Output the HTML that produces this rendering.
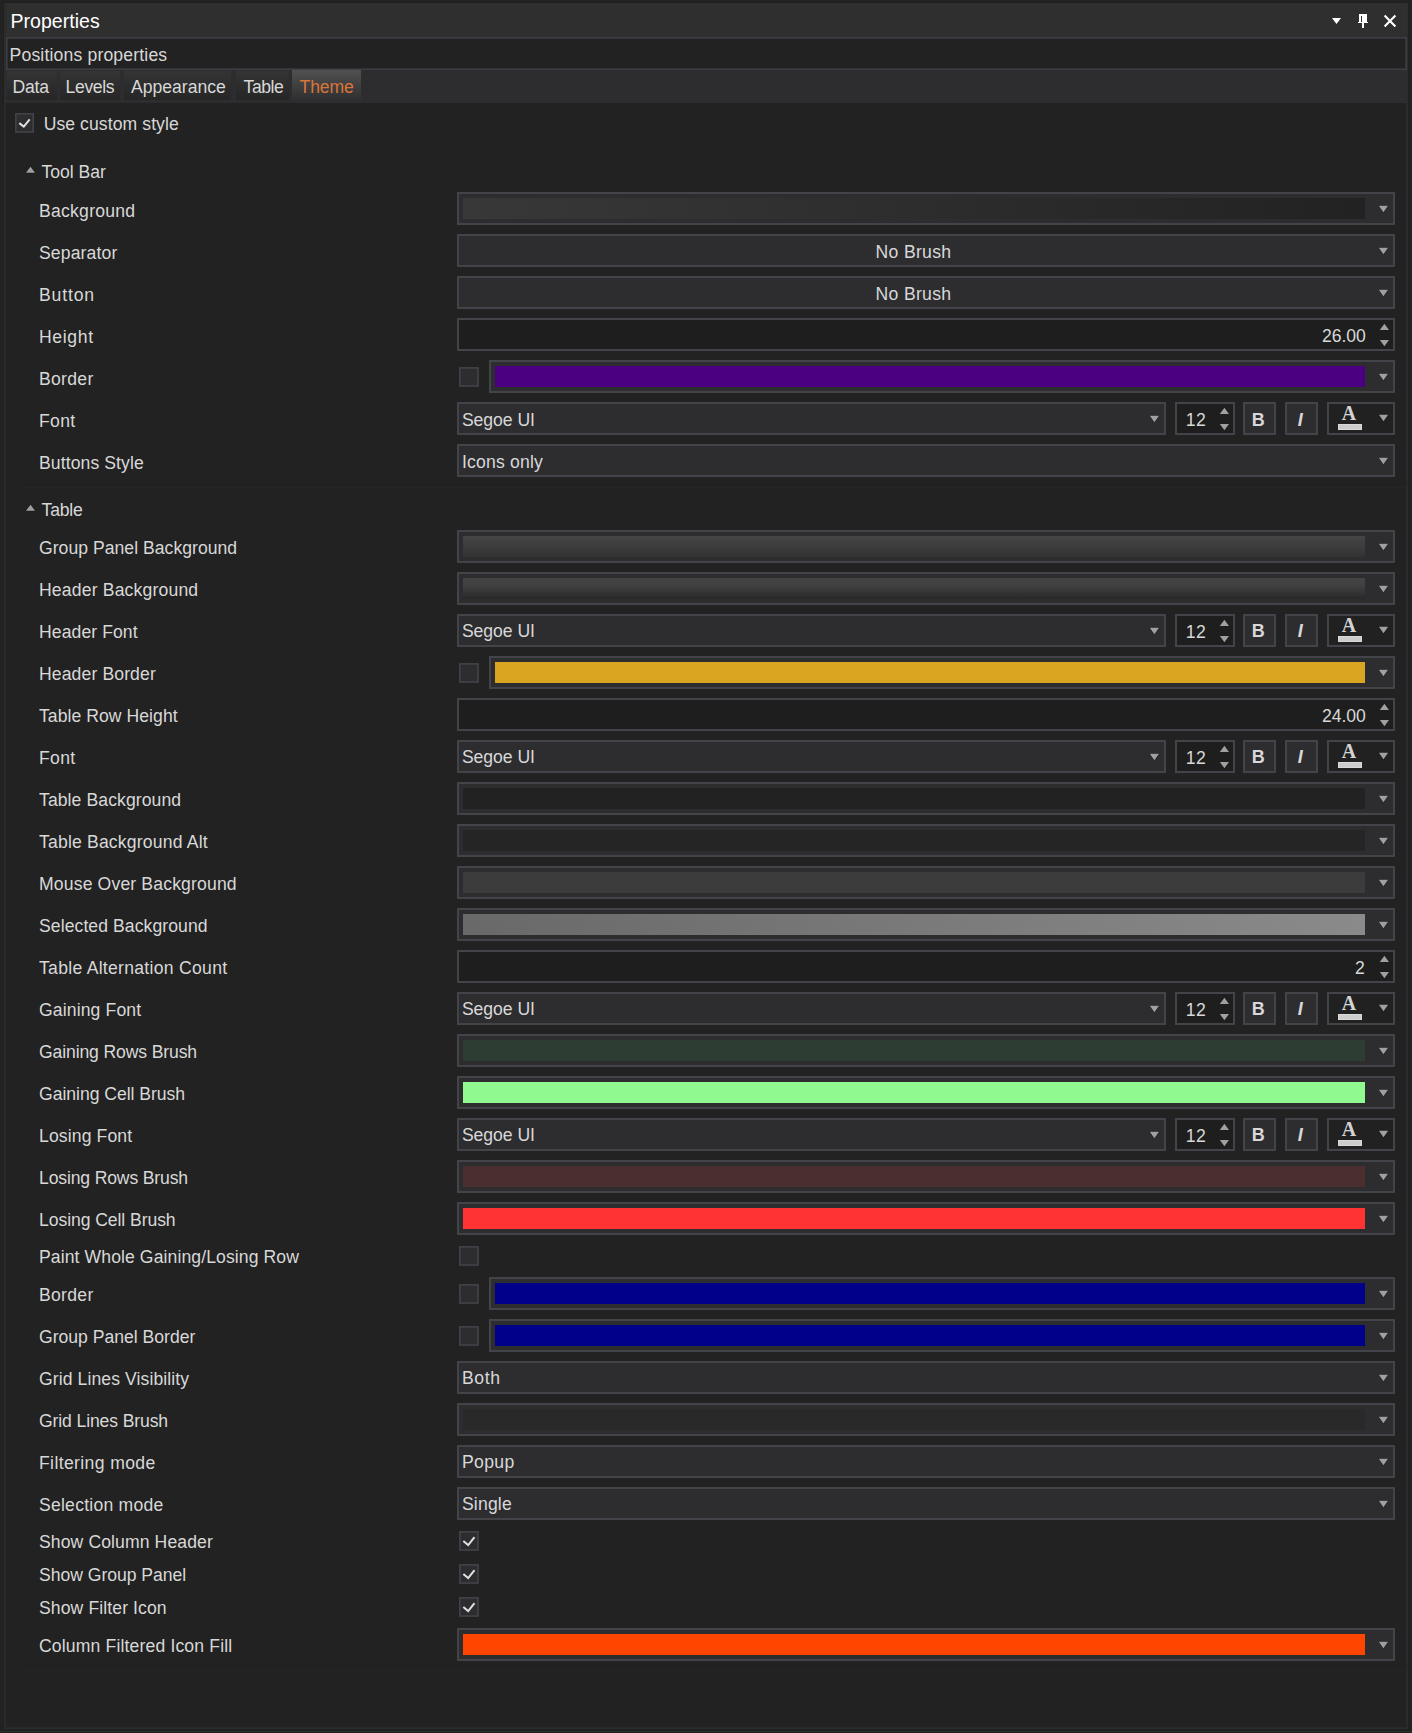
<!DOCTYPE html>
<html><head><meta charset="utf-8"><title>Properties</title>
<style>
html,body{margin:0;padding:0;}
body{width:1412px;height:1733px;background:#222222;position:relative;overflow:hidden;font-family:"Liberation Sans",sans-serif;}
div,svg,span{position:absolute;display:block;}
div{box-sizing:content-box;}
span{white-space:pre;line-height:20px;height:20px;}
</style></head><body>
<div style="left:3px;top:2px;width:1406px;height:1728px;background:#1f1f1f;"></div>
<div style="left:4px;top:3px;width:1404px;height:1726px;background:#222222;"></div>
<div style="left:4px;top:3px;width:1404px;height:34px;background:#2f2f2f;"></div>
<div style="left:5px;top:4px;width:1px;height:33px;background:#2b2b2b;"></div>
<div style="left:4px;top:37px;width:1404px;height:66px;background:#2d2d30;"></div>
<div style="left:4px;top:3px;width:1px;height:1726px;background:#2d2d30;"></div>
<div style="left:5px;top:103px;width:1px;height:1625px;background:#28282a;"></div>
<div style="left:1407px;top:3px;width:1px;height:1726px;background:#2d2d30;"></div>
<div style="left:1406px;top:103px;width:1px;height:1625px;background:#28282a;"></div>
<div style="left:4px;top:1728px;width:1404px;height:1px;background:#2b2b2d;"></div>
<div style="left:6px;top:1727px;width:1400px;height:1px;background:#29292b;"></div>
<div style="left:0px;top:1729px;width:1412px;height:2px;background:#212121;"></div>
<div style="left:0px;top:1731px;width:1412px;height:1px;background:#2e2e2e;"></div>
<div style="left:0px;top:1732px;width:1412px;height:1px;background:#222222;"></div>
<svg style="left:1332px;top:18px" width="9" height="6" viewBox="0 0 9 6"><path d="M0 0H9L4.5 6Z" fill="#fff"/></svg>
<svg style="left:1357px;top:13px" width="12" height="16" viewBox="0 0 12 16"><path d="M2 1H10V9H11V10H7V15H5V10H1V9H2Z" fill="#fff"/><rect x="4" y="3" width="1" height="6" fill="#2d2d2d"/></svg>
<svg style="left:1383px;top:14px" width="14" height="14" viewBox="0 0 14 14"><path d="M1.6 1.6L12.4 12.4M12.4 1.6L1.6 12.4" stroke="#fff" stroke-width="2.1" fill="none"/></svg>
<svg style="left:0;top:30px" width="1412" height="48" viewBox="0 30 1412 48"><rect x="6.81" y="37.92" width="1399.34" height="31.25" fill="#222222" stroke="#3f3f46" stroke-width="1.5"/></svg>
<div style="left:7px;top:71px;width:50px;height:29px;background:linear-gradient(#343434,#262626);"></div>
<div style="left:60px;top:71px;width:60px;height:29px;background:linear-gradient(#343434,#262626);"></div>
<div style="left:124px;top:71px;width:107px;height:29px;background:linear-gradient(#343434,#262626);"></div>
<div style="left:236px;top:71px;width:53px;height:29px;background:linear-gradient(#343434,#262626);"></div>
<div style="left:292px;top:70px;width:69px;height:30px;background:linear-gradient(#515151,#2f2f31);"></div>
<svg style="left:15px;top:113px" width="21" height="21" viewBox="0 0 21 21"><rect x=".85" y=".85" width="17.40" height="18.10" fill="#2d2d30" stroke="#44444b" stroke-width="1.5"/><path d="M4.3 10.1L8.8 13.6L14.7 6.3" fill="none" stroke="#e0e0e0" stroke-width="2"/></svg>
<svg style="left:24px;top:164px" width="14" height="11" viewBox="0 0 14 11"><path d="M2.00 8.80H11.00L6.50 2.80Z" fill="#a0a0a0" stroke="#1d1d1d" stroke-width=".9" paint-order="stroke"/></svg>
<div style="left:457px;top:192px;width:934px;height:29px;background:#2d2d30;border:2px solid #43434a;"></div>
<div style="left:463px;top:198px;width:902px;height:21px;background:linear-gradient(90deg,#383838,#222222);"></div>
<svg style="left:1376px;top:203px" width="14" height="11" viewBox="0 0 14 11"><path d="M2.80 2.80H12.00L7.40 9.30Z" fill="#a0a0a0" stroke="#1d1d1d" stroke-width=".9" paint-order="stroke"/></svg>
<div style="left:457px;top:234px;width:934px;height:29px;background:#2d2d30;border:2px solid #43434a;"></div>
<svg style="left:1376px;top:245px" width="14" height="11" viewBox="0 0 14 11"><path d="M2.80 2.80H12.00L7.40 9.30Z" fill="#a0a0a0" stroke="#1d1d1d" stroke-width=".9" paint-order="stroke"/></svg>
<div style="left:457px;top:276px;width:934px;height:29px;background:#2d2d30;border:2px solid #43434a;"></div>
<svg style="left:1376px;top:287px" width="14" height="11" viewBox="0 0 14 11"><path d="M2.80 2.80H12.00L7.40 9.30Z" fill="#a0a0a0" stroke="#1d1d1d" stroke-width=".9" paint-order="stroke"/></svg>
<div style="left:457px;top:318px;width:934px;height:29px;background:#1e1e1e;border:2px solid #43434a;"></div>
<svg style="left:1377px;top:321px" width="14" height="11" viewBox="0 0 14 11"><path d="M2.80 9.10H12.00L7.40 2.80Z" fill="#a0a0a0" stroke="#1d1d1d" stroke-width=".9" paint-order="stroke"/></svg>
<svg style="left:1377px;top:337px" width="14" height="11" viewBox="0 0 14 11"><path d="M2.80 2.90H12.00L7.40 9.30Z" fill="#a0a0a0" stroke="#1d1d1d" stroke-width=".9" paint-order="stroke"/></svg>
<svg style="left:459px;top:367px" width="21" height="21" viewBox="0 0 21 21"><rect x=".85" y=".85" width="18.20" height="18.20" fill="#2d2d30" stroke="#44444b" stroke-width="1.5"/></svg>
<div style="left:489px;top:360px;width:902px;height:29px;background:#2d2d30;border:2px solid #43434a;"></div>
<div style="left:495px;top:366px;width:870px;height:21px;background:#4b0082;"></div>
<svg style="left:1376px;top:371px" width="14" height="11" viewBox="0 0 14 11"><path d="M2.80 2.80H12.00L7.40 9.30Z" fill="#a0a0a0" stroke="#1d1d1d" stroke-width=".9" paint-order="stroke"/></svg>
<div style="left:457px;top:402px;width:705px;height:29px;background:#2d2d30;border:2px solid #43434a;"></div>
<svg style="left:1147px;top:413px" width="14" height="11" viewBox="0 0 14 11"><path d="M2.80 2.80H12.00L7.40 9.30Z" fill="#a0a0a0" stroke="#1d1d1d" stroke-width=".9" paint-order="stroke"/></svg>
<div style="left:1175px;top:402px;width:56px;height:29px;background:#1e1e1e;border:2px solid #43434a;"></div>
<svg style="left:1217px;top:405px" width="14" height="11" viewBox="0 0 14 11"><path d="M2.80 9.10H12.00L7.40 2.80Z" fill="#a0a0a0" stroke="#1d1d1d" stroke-width=".9" paint-order="stroke"/></svg>
<svg style="left:1217px;top:421px" width="14" height="11" viewBox="0 0 14 11"><path d="M2.80 2.90H12.00L7.40 9.30Z" fill="#a0a0a0" stroke="#1d1d1d" stroke-width=".9" paint-order="stroke"/></svg>
<div style="left:1243px;top:402px;width:29px;height:29px;background:#2d2d30;border:2px solid #43434a;"></div>
<div style="left:1285px;top:402px;width:29px;height:29px;background:#2d2d30;border:2px solid #43434a;"></div>
<div style="left:1327px;top:402px;width:64px;height:29px;background:#212121;border:2px solid #43434a;"></div>
<div style="left:1338px;top:424px;width:22px;height:4px;background:#cccccc;border:1px solid #d9d9d9;"></div>
<svg style="left:1376px;top:412px" width="14" height="11" viewBox="0 0 14 11"><path d="M2.90 2.80H12.10L7.50 9.20Z" fill="#a0a0a0" stroke="#1d1d1d" stroke-width=".9" paint-order="stroke"/></svg>
<div style="left:457px;top:444px;width:934px;height:29px;background:#2d2d30;border:2px solid #43434a;"></div>
<svg style="left:1376px;top:455px" width="14" height="11" viewBox="0 0 14 11"><path d="M2.80 2.80H12.00L7.40 9.30Z" fill="#a0a0a0" stroke="#1d1d1d" stroke-width=".9" paint-order="stroke"/></svg>
<div style="left:22px;top:487px;width:1385px;height:1px;background:#262626;"></div>
<svg style="left:24px;top:502px" width="14" height="11" viewBox="0 0 14 11"><path d="M2.00 8.80H11.00L6.50 2.80Z" fill="#a0a0a0" stroke="#1d1d1d" stroke-width=".9" paint-order="stroke"/></svg>
<div style="left:457px;top:530px;width:934px;height:29px;background:#2d2d30;border:2px solid #43434a;"></div>
<div style="left:463px;top:536px;width:902px;height:21px;background:linear-gradient(#454545,#333333);"></div>
<svg style="left:1376px;top:541px" width="14" height="11" viewBox="0 0 14 11"><path d="M2.80 2.80H12.00L7.40 9.30Z" fill="#a0a0a0" stroke="#1d1d1d" stroke-width=".9" paint-order="stroke"/></svg>
<div style="left:457px;top:572px;width:934px;height:29px;background:#2d2d30;border:2px solid #43434a;"></div>
<div style="left:463px;top:578px;width:902px;height:21px;background:linear-gradient(#444444 0%,#414141 35%,#282828 100%);"></div>
<svg style="left:1376px;top:583px" width="14" height="11" viewBox="0 0 14 11"><path d="M2.80 2.80H12.00L7.40 9.30Z" fill="#a0a0a0" stroke="#1d1d1d" stroke-width=".9" paint-order="stroke"/></svg>
<div style="left:457px;top:614px;width:705px;height:29px;background:#2d2d30;border:2px solid #43434a;"></div>
<svg style="left:1147px;top:625px" width="14" height="11" viewBox="0 0 14 11"><path d="M2.80 2.80H12.00L7.40 9.30Z" fill="#a0a0a0" stroke="#1d1d1d" stroke-width=".9" paint-order="stroke"/></svg>
<div style="left:1175px;top:614px;width:56px;height:29px;background:#1e1e1e;border:2px solid #43434a;"></div>
<svg style="left:1217px;top:617px" width="14" height="11" viewBox="0 0 14 11"><path d="M2.80 9.10H12.00L7.40 2.80Z" fill="#a0a0a0" stroke="#1d1d1d" stroke-width=".9" paint-order="stroke"/></svg>
<svg style="left:1217px;top:633px" width="14" height="11" viewBox="0 0 14 11"><path d="M2.80 2.90H12.00L7.40 9.30Z" fill="#a0a0a0" stroke="#1d1d1d" stroke-width=".9" paint-order="stroke"/></svg>
<div style="left:1243px;top:614px;width:29px;height:29px;background:#2d2d30;border:2px solid #43434a;"></div>
<div style="left:1285px;top:614px;width:29px;height:29px;background:#2d2d30;border:2px solid #43434a;"></div>
<div style="left:1327px;top:614px;width:64px;height:29px;background:#212121;border:2px solid #43434a;"></div>
<div style="left:1338px;top:636px;width:22px;height:4px;background:#cccccc;border:1px solid #d9d9d9;"></div>
<svg style="left:1376px;top:624px" width="14" height="11" viewBox="0 0 14 11"><path d="M2.90 2.80H12.10L7.50 9.20Z" fill="#a0a0a0" stroke="#1d1d1d" stroke-width=".9" paint-order="stroke"/></svg>
<svg style="left:459px;top:663px" width="21" height="21" viewBox="0 0 21 21"><rect x=".85" y=".85" width="18.20" height="18.20" fill="#2d2d30" stroke="#44444b" stroke-width="1.5"/></svg>
<div style="left:489px;top:656px;width:902px;height:29px;background:#2d2d30;border:2px solid #43434a;"></div>
<div style="left:495px;top:662px;width:870px;height:21px;background:#daa520;"></div>
<svg style="left:1376px;top:667px" width="14" height="11" viewBox="0 0 14 11"><path d="M2.80 2.80H12.00L7.40 9.30Z" fill="#a0a0a0" stroke="#1d1d1d" stroke-width=".9" paint-order="stroke"/></svg>
<div style="left:457px;top:698px;width:934px;height:29px;background:#1e1e1e;border:2px solid #43434a;"></div>
<svg style="left:1377px;top:701px" width="14" height="11" viewBox="0 0 14 11"><path d="M2.80 9.10H12.00L7.40 2.80Z" fill="#a0a0a0" stroke="#1d1d1d" stroke-width=".9" paint-order="stroke"/></svg>
<svg style="left:1377px;top:717px" width="14" height="11" viewBox="0 0 14 11"><path d="M2.80 2.90H12.00L7.40 9.30Z" fill="#a0a0a0" stroke="#1d1d1d" stroke-width=".9" paint-order="stroke"/></svg>
<div style="left:457px;top:740px;width:705px;height:29px;background:#2d2d30;border:2px solid #43434a;"></div>
<svg style="left:1147px;top:751px" width="14" height="11" viewBox="0 0 14 11"><path d="M2.80 2.80H12.00L7.40 9.30Z" fill="#a0a0a0" stroke="#1d1d1d" stroke-width=".9" paint-order="stroke"/></svg>
<div style="left:1175px;top:740px;width:56px;height:29px;background:#1e1e1e;border:2px solid #43434a;"></div>
<svg style="left:1217px;top:743px" width="14" height="11" viewBox="0 0 14 11"><path d="M2.80 9.10H12.00L7.40 2.80Z" fill="#a0a0a0" stroke="#1d1d1d" stroke-width=".9" paint-order="stroke"/></svg>
<svg style="left:1217px;top:759px" width="14" height="11" viewBox="0 0 14 11"><path d="M2.80 2.90H12.00L7.40 9.30Z" fill="#a0a0a0" stroke="#1d1d1d" stroke-width=".9" paint-order="stroke"/></svg>
<div style="left:1243px;top:740px;width:29px;height:29px;background:#2d2d30;border:2px solid #43434a;"></div>
<div style="left:1285px;top:740px;width:29px;height:29px;background:#2d2d30;border:2px solid #43434a;"></div>
<div style="left:1327px;top:740px;width:64px;height:29px;background:#212121;border:2px solid #43434a;"></div>
<div style="left:1338px;top:762px;width:22px;height:4px;background:#cccccc;border:1px solid #d9d9d9;"></div>
<svg style="left:1376px;top:750px" width="14" height="11" viewBox="0 0 14 11"><path d="M2.90 2.80H12.10L7.50 9.20Z" fill="#a0a0a0" stroke="#1d1d1d" stroke-width=".9" paint-order="stroke"/></svg>
<div style="left:457px;top:782px;width:934px;height:29px;background:#2d2d30;border:2px solid #43434a;"></div>
<div style="left:463px;top:788px;width:902px;height:21px;background:#222222;"></div>
<svg style="left:1376px;top:793px" width="14" height="11" viewBox="0 0 14 11"><path d="M2.80 2.80H12.00L7.40 9.30Z" fill="#a0a0a0" stroke="#1d1d1d" stroke-width=".9" paint-order="stroke"/></svg>
<div style="left:457px;top:824px;width:934px;height:29px;background:#2d2d30;border:2px solid #43434a;"></div>
<div style="left:463px;top:830px;width:902px;height:21px;background:#252526;"></div>
<svg style="left:1376px;top:835px" width="14" height="11" viewBox="0 0 14 11"><path d="M2.80 2.80H12.00L7.40 9.30Z" fill="#a0a0a0" stroke="#1d1d1d" stroke-width=".9" paint-order="stroke"/></svg>
<div style="left:457px;top:866px;width:934px;height:29px;background:#2d2d30;border:2px solid #43434a;"></div>
<div style="left:463px;top:872px;width:902px;height:21px;background:#3c3c3c;"></div>
<svg style="left:1376px;top:877px" width="14" height="11" viewBox="0 0 14 11"><path d="M2.80 2.80H12.00L7.40 9.30Z" fill="#a0a0a0" stroke="#1d1d1d" stroke-width=".9" paint-order="stroke"/></svg>
<div style="left:457px;top:908px;width:934px;height:29px;background:#2d2d30;border:2px solid #43434a;"></div>
<div style="left:463px;top:914px;width:902px;height:21px;background:linear-gradient(90deg,#696969,#8a8a8a);"></div>
<svg style="left:1376px;top:919px" width="14" height="11" viewBox="0 0 14 11"><path d="M2.80 2.80H12.00L7.40 9.30Z" fill="#a0a0a0" stroke="#1d1d1d" stroke-width=".9" paint-order="stroke"/></svg>
<div style="left:457px;top:950px;width:934px;height:29px;background:#1e1e1e;border:2px solid #43434a;"></div>
<svg style="left:1377px;top:953px" width="14" height="11" viewBox="0 0 14 11"><path d="M2.80 9.10H12.00L7.40 2.80Z" fill="#a0a0a0" stroke="#1d1d1d" stroke-width=".9" paint-order="stroke"/></svg>
<svg style="left:1377px;top:969px" width="14" height="11" viewBox="0 0 14 11"><path d="M2.80 2.90H12.00L7.40 9.30Z" fill="#a0a0a0" stroke="#1d1d1d" stroke-width=".9" paint-order="stroke"/></svg>
<div style="left:457px;top:992px;width:705px;height:29px;background:#2d2d30;border:2px solid #43434a;"></div>
<svg style="left:1147px;top:1003px" width="14" height="11" viewBox="0 0 14 11"><path d="M2.80 2.80H12.00L7.40 9.30Z" fill="#a0a0a0" stroke="#1d1d1d" stroke-width=".9" paint-order="stroke"/></svg>
<div style="left:1175px;top:992px;width:56px;height:29px;background:#1e1e1e;border:2px solid #43434a;"></div>
<svg style="left:1217px;top:995px" width="14" height="11" viewBox="0 0 14 11"><path d="M2.80 9.10H12.00L7.40 2.80Z" fill="#a0a0a0" stroke="#1d1d1d" stroke-width=".9" paint-order="stroke"/></svg>
<svg style="left:1217px;top:1011px" width="14" height="11" viewBox="0 0 14 11"><path d="M2.80 2.90H12.00L7.40 9.30Z" fill="#a0a0a0" stroke="#1d1d1d" stroke-width=".9" paint-order="stroke"/></svg>
<div style="left:1243px;top:992px;width:29px;height:29px;background:#2d2d30;border:2px solid #43434a;"></div>
<div style="left:1285px;top:992px;width:29px;height:29px;background:#2d2d30;border:2px solid #43434a;"></div>
<div style="left:1327px;top:992px;width:64px;height:29px;background:#212121;border:2px solid #43434a;"></div>
<div style="left:1338px;top:1014px;width:22px;height:4px;background:#cccccc;border:1px solid #d9d9d9;"></div>
<svg style="left:1376px;top:1002px" width="14" height="11" viewBox="0 0 14 11"><path d="M2.90 2.80H12.10L7.50 9.20Z" fill="#a0a0a0" stroke="#1d1d1d" stroke-width=".9" paint-order="stroke"/></svg>
<div style="left:457px;top:1034px;width:934px;height:29px;background:#2d2d30;border:2px solid #43434a;"></div>
<div style="left:463px;top:1040px;width:902px;height:21px;background:#2d3d33;"></div>
<svg style="left:1376px;top:1045px" width="14" height="11" viewBox="0 0 14 11"><path d="M2.80 2.80H12.00L7.40 9.30Z" fill="#a0a0a0" stroke="#1d1d1d" stroke-width=".9" paint-order="stroke"/></svg>
<div style="left:457px;top:1076px;width:934px;height:29px;background:#2d2d30;border:2px solid #43434a;"></div>
<div style="left:463px;top:1082px;width:902px;height:21px;background:#90fa90;"></div>
<svg style="left:1376px;top:1087px" width="14" height="11" viewBox="0 0 14 11"><path d="M2.80 2.80H12.00L7.40 9.30Z" fill="#a0a0a0" stroke="#1d1d1d" stroke-width=".9" paint-order="stroke"/></svg>
<div style="left:457px;top:1118px;width:705px;height:29px;background:#2d2d30;border:2px solid #43434a;"></div>
<svg style="left:1147px;top:1129px" width="14" height="11" viewBox="0 0 14 11"><path d="M2.80 2.80H12.00L7.40 9.30Z" fill="#a0a0a0" stroke="#1d1d1d" stroke-width=".9" paint-order="stroke"/></svg>
<div style="left:1175px;top:1118px;width:56px;height:29px;background:#1e1e1e;border:2px solid #43434a;"></div>
<svg style="left:1217px;top:1121px" width="14" height="11" viewBox="0 0 14 11"><path d="M2.80 9.10H12.00L7.40 2.80Z" fill="#a0a0a0" stroke="#1d1d1d" stroke-width=".9" paint-order="stroke"/></svg>
<svg style="left:1217px;top:1137px" width="14" height="11" viewBox="0 0 14 11"><path d="M2.80 2.90H12.00L7.40 9.30Z" fill="#a0a0a0" stroke="#1d1d1d" stroke-width=".9" paint-order="stroke"/></svg>
<div style="left:1243px;top:1118px;width:29px;height:29px;background:#2d2d30;border:2px solid #43434a;"></div>
<div style="left:1285px;top:1118px;width:29px;height:29px;background:#2d2d30;border:2px solid #43434a;"></div>
<div style="left:1327px;top:1118px;width:64px;height:29px;background:#212121;border:2px solid #43434a;"></div>
<div style="left:1338px;top:1140px;width:22px;height:4px;background:#cccccc;border:1px solid #d9d9d9;"></div>
<svg style="left:1376px;top:1128px" width="14" height="11" viewBox="0 0 14 11"><path d="M2.90 2.80H12.10L7.50 9.20Z" fill="#a0a0a0" stroke="#1d1d1d" stroke-width=".9" paint-order="stroke"/></svg>
<div style="left:457px;top:1160px;width:934px;height:29px;background:#2d2d30;border:2px solid #43434a;"></div>
<div style="left:463px;top:1166px;width:902px;height:21px;background:#4b2e30;"></div>
<svg style="left:1376px;top:1171px" width="14" height="11" viewBox="0 0 14 11"><path d="M2.80 2.80H12.00L7.40 9.30Z" fill="#a0a0a0" stroke="#1d1d1d" stroke-width=".9" paint-order="stroke"/></svg>
<div style="left:457px;top:1202px;width:934px;height:29px;background:#2d2d30;border:2px solid #43434a;"></div>
<div style="left:463px;top:1208px;width:902px;height:21px;background:#ff3333;"></div>
<svg style="left:1376px;top:1213px" width="14" height="11" viewBox="0 0 14 11"><path d="M2.80 2.80H12.00L7.40 9.30Z" fill="#a0a0a0" stroke="#1d1d1d" stroke-width=".9" paint-order="stroke"/></svg>
<svg style="left:459px;top:1246px" width="21" height="21" viewBox="0 0 21 21"><rect x=".85" y=".85" width="18.20" height="18.20" fill="#2d2d30" stroke="#44444b" stroke-width="1.5"/></svg>
<svg style="left:459px;top:1284px" width="21" height="21" viewBox="0 0 21 21"><rect x=".85" y=".85" width="18.20" height="18.20" fill="#2d2d30" stroke="#44444b" stroke-width="1.5"/></svg>
<div style="left:489px;top:1277px;width:902px;height:29px;background:#2d2d30;border:2px solid #43434a;"></div>
<div style="left:495px;top:1283px;width:870px;height:21px;background:#00008b;"></div>
<svg style="left:1376px;top:1288px" width="14" height="11" viewBox="0 0 14 11"><path d="M2.80 2.80H12.00L7.40 9.30Z" fill="#a0a0a0" stroke="#1d1d1d" stroke-width=".9" paint-order="stroke"/></svg>
<svg style="left:459px;top:1326px" width="21" height="21" viewBox="0 0 21 21"><rect x=".85" y=".85" width="18.20" height="18.20" fill="#2d2d30" stroke="#44444b" stroke-width="1.5"/></svg>
<div style="left:489px;top:1319px;width:902px;height:29px;background:#2d2d30;border:2px solid #43434a;"></div>
<div style="left:495px;top:1325px;width:870px;height:21px;background:#00008b;"></div>
<svg style="left:1376px;top:1330px" width="14" height="11" viewBox="0 0 14 11"><path d="M2.80 2.80H12.00L7.40 9.30Z" fill="#a0a0a0" stroke="#1d1d1d" stroke-width=".9" paint-order="stroke"/></svg>
<div style="left:457px;top:1361px;width:934px;height:29px;background:#2d2d30;border:2px solid #43434a;"></div>
<svg style="left:1376px;top:1372px" width="14" height="11" viewBox="0 0 14 11"><path d="M2.80 2.80H12.00L7.40 9.30Z" fill="#a0a0a0" stroke="#1d1d1d" stroke-width=".9" paint-order="stroke"/></svg>
<div style="left:457px;top:1403px;width:934px;height:29px;background:#2d2d30;border:2px solid #43434a;"></div>
<div style="left:463px;top:1409px;width:902px;height:21px;background:#29292a;"></div>
<svg style="left:1376px;top:1414px" width="14" height="11" viewBox="0 0 14 11"><path d="M2.80 2.80H12.00L7.40 9.30Z" fill="#a0a0a0" stroke="#1d1d1d" stroke-width=".9" paint-order="stroke"/></svg>
<div style="left:457px;top:1445px;width:934px;height:29px;background:#2d2d30;border:2px solid #43434a;"></div>
<svg style="left:1376px;top:1456px" width="14" height="11" viewBox="0 0 14 11"><path d="M2.80 2.80H12.00L7.40 9.30Z" fill="#a0a0a0" stroke="#1d1d1d" stroke-width=".9" paint-order="stroke"/></svg>
<div style="left:457px;top:1487px;width:934px;height:29px;background:#2d2d30;border:2px solid #43434a;"></div>
<svg style="left:1376px;top:1498px" width="14" height="11" viewBox="0 0 14 11"><path d="M2.80 2.80H12.00L7.40 9.30Z" fill="#a0a0a0" stroke="#1d1d1d" stroke-width=".9" paint-order="stroke"/></svg>
<svg style="left:459px;top:1531px" width="21" height="21" viewBox="0 0 21 21"><rect x=".85" y=".85" width="18.20" height="18.20" fill="#2d2d30" stroke="#44444b" stroke-width="1.5"/><path d="M4.3 9.9L9.2 14.1L15.5 6.2" fill="none" stroke="#e0e0e0" stroke-width="2"/></svg>
<svg style="left:459px;top:1564px" width="21" height="21" viewBox="0 0 21 21"><rect x=".85" y=".85" width="18.20" height="18.20" fill="#2d2d30" stroke="#44444b" stroke-width="1.5"/><path d="M4.3 9.9L9.2 14.1L15.5 6.2" fill="none" stroke="#e0e0e0" stroke-width="2"/></svg>
<svg style="left:459px;top:1597px" width="21" height="21" viewBox="0 0 21 21"><rect x=".85" y=".85" width="18.20" height="18.20" fill="#2d2d30" stroke="#44444b" stroke-width="1.5"/><path d="M4.3 9.9L9.2 14.1L15.5 6.2" fill="none" stroke="#e0e0e0" stroke-width="2"/></svg>
<div style="left:457px;top:1628px;width:934px;height:29px;background:#2d2d30;border:2px solid #43434a;"></div>
<div style="left:463px;top:1634px;width:902px;height:21px;background:#ff4500;"></div>
<svg style="left:1376px;top:1639px" width="14" height="11" viewBox="0 0 14 11"><path d="M2.80 2.80H12.00L7.40 9.30Z" fill="#a0a0a0" stroke="#1d1d1d" stroke-width=".9" paint-order="stroke"/></svg>
<div style="left:22px;top:1670px;width:1385px;height:1px;background:#262626;"></div>
<span id="t0" style="left:10.40px;top:11.24px;font-size:19.5px;color:#ffffff;letter-spacing:0.048px;">Properties</span>
<span id="t1" style="left:9.56px;top:44.90px;font-size:17.6px;color:#d8d8d8;letter-spacing:0.161px;">Positions properties</span>
<span id="t2" style="left:12.56px;top:76.90px;font-size:17.6px;color:#d8d8d8;letter-spacing:-0.243px;">Data</span>
<span id="t3" style="left:65.56px;top:76.90px;font-size:17.6px;color:#d8d8d8;letter-spacing:-0.356px;">Levels</span>
<span id="t4" style="left:130.97px;top:76.90px;font-size:17.6px;color:#d8d8d8;letter-spacing:-0.008px;">Appearance</span>
<span id="t5" style="left:243.60px;top:76.90px;font-size:17.6px;color:#d8d8d8;letter-spacing:-0.471px;">Table</span>
<span id="t6" style="left:299.60px;top:76.90px;font-size:17.6px;color:#da7538;letter-spacing:-0.147px;">Theme</span>
<span id="t7" style="left:43.64px;top:113.90px;font-size:17.6px;color:#d8d8d8;letter-spacing:0.079px;">Use custom style</span>
<span id="t8" style="left:41.60px;top:161.90px;font-size:17.6px;color:#d8d8d8;letter-spacing:-0.051px;">Tool Bar</span>
<span id="t9" style="left:39.00px;top:200.90px;font-size:17.6px;color:#d8d8d8;letter-spacing:0.248px;">Background</span>
<span id="t10" style="left:39.00px;top:242.90px;font-size:17.6px;color:#d8d8d8;letter-spacing:0.128px;">Separator</span>
<span id="t11" style="left:39.00px;top:284.90px;font-size:17.6px;color:#d8d8d8;letter-spacing:0.854px;">Button</span>
<span id="t12" style="left:39.00px;top:326.90px;font-size:17.6px;color:#d8d8d8;letter-spacing:0.654px;">Height</span>
<span id="t13" style="left:39.00px;top:368.90px;font-size:17.6px;color:#d8d8d8;letter-spacing:0.296px;">Border</span>
<span id="t14" style="left:39.00px;top:410.90px;font-size:17.6px;color:#d8d8d8;letter-spacing:0.303px;">Font</span>
<span id="t15" style="left:39.00px;top:452.90px;font-size:17.6px;color:#d8d8d8;letter-spacing:0.093px;">Buttons Style</span>
<span id="t16" style="left:875.56px;top:241.90px;font-size:17.6px;color:#d8d8d8;letter-spacing:0.320px;">No Brush</span>
<span id="t17" style="left:875.56px;top:283.90px;font-size:17.6px;color:#d8d8d8;letter-spacing:0.320px;">No Brush</span>
<span id="t18" style="left:1322.11px;top:325.90px;font-size:17.6px;color:#d8d8d8;letter-spacing:-0.115px;">26.00</span>
<span id="t19" style="left:461.90px;top:409.90px;font-size:17.6px;color:#d8d8d8;letter-spacing:-0.034px;">Segoe UI</span>
<span id="t20" style="left:1185.66px;top:409.90px;font-size:17.6px;color:#d8d8d8;letter-spacing:0.648px;">12</span>
<span id="t21" style="left:1251.80px;top:409.76px;font-size:18px;color:#d8d8d8;letter-spacing:0.000px;font-weight:bold;">B</span>
<span id="t22" style="left:1297.68px;top:409.76px;font-size:18px;color:#d8d8d8;letter-spacing:0.000px;font-weight:bold;font-style:italic;">I</span>
<span id="t23" style="left:1341.80px;top:403.25px;font-size:20px;color:#d4d4d4;letter-spacing:0.000px;font-family:'Liberation Serif',serif;font-weight:bold;">A</span>
<span id="t24" style="left:461.90px;top:451.90px;font-size:17.6px;color:#d8d8d8;letter-spacing:0.191px;">Icons only</span>
<span id="t25" style="left:41.60px;top:499.90px;font-size:17.6px;color:#d8d8d8;letter-spacing:-0.221px;">Table</span>
<span id="t26" style="left:39.00px;top:537.90px;font-size:17.6px;color:#d8d8d8;letter-spacing:0.026px;">Group Panel Background</span>
<span id="t27" style="left:39.00px;top:579.90px;font-size:17.6px;color:#d8d8d8;letter-spacing:0.165px;">Header Background</span>
<span id="t28" style="left:39.00px;top:621.90px;font-size:17.6px;color:#d8d8d8;letter-spacing:0.083px;">Header Font</span>
<span id="t29" style="left:461.90px;top:620.90px;font-size:17.6px;color:#d8d8d8;letter-spacing:-0.034px;">Segoe UI</span>
<span id="t30" style="left:1185.66px;top:621.90px;font-size:17.6px;color:#d8d8d8;letter-spacing:0.648px;">12</span>
<span id="t31" style="left:1251.80px;top:620.76px;font-size:18px;color:#d8d8d8;letter-spacing:0.000px;font-weight:bold;">B</span>
<span id="t32" style="left:1297.68px;top:620.76px;font-size:18px;color:#d8d8d8;letter-spacing:0.000px;font-weight:bold;font-style:italic;">I</span>
<span id="t33" style="left:1341.80px;top:615.25px;font-size:20px;color:#d4d4d4;letter-spacing:0.000px;font-family:'Liberation Serif',serif;font-weight:bold;">A</span>
<span id="t34" style="left:39.00px;top:663.90px;font-size:17.6px;color:#d8d8d8;letter-spacing:0.115px;">Header Border</span>
<span id="t35" style="left:39.00px;top:705.90px;font-size:17.6px;color:#d8d8d8;letter-spacing:0.049px;">Table Row Height</span>
<span id="t36" style="left:1322.11px;top:705.90px;font-size:17.6px;color:#d8d8d8;letter-spacing:-0.115px;">24.00</span>
<span id="t37" style="left:39.00px;top:747.90px;font-size:17.6px;color:#d8d8d8;letter-spacing:0.303px;">Font</span>
<span id="t38" style="left:461.90px;top:746.90px;font-size:17.6px;color:#d8d8d8;letter-spacing:-0.034px;">Segoe UI</span>
<span id="t39" style="left:1185.66px;top:747.90px;font-size:17.6px;color:#d8d8d8;letter-spacing:0.648px;">12</span>
<span id="t40" style="left:1251.80px;top:746.76px;font-size:18px;color:#d8d8d8;letter-spacing:0.000px;font-weight:bold;">B</span>
<span id="t41" style="left:1297.68px;top:746.76px;font-size:18px;color:#d8d8d8;letter-spacing:0.000px;font-weight:bold;font-style:italic;">I</span>
<span id="t42" style="left:1341.80px;top:741.25px;font-size:20px;color:#d4d4d4;letter-spacing:0.000px;font-family:'Liberation Serif',serif;font-weight:bold;">A</span>
<span id="t43" style="left:39.00px;top:789.90px;font-size:17.6px;color:#d8d8d8;letter-spacing:0.085px;">Table Background</span>
<span id="t44" style="left:39.00px;top:831.90px;font-size:17.6px;color:#d8d8d8;letter-spacing:0.175px;">Table Background Alt</span>
<span id="t45" style="left:39.00px;top:873.90px;font-size:17.6px;color:#d8d8d8;letter-spacing:0.151px;">Mouse Over Background</span>
<span id="t46" style="left:39.00px;top:915.90px;font-size:17.6px;color:#d8d8d8;letter-spacing:0.076px;">Selected Background</span>
<span id="t47" style="left:39.00px;top:957.90px;font-size:17.6px;color:#d8d8d8;letter-spacing:0.281px;">Table Alternation Count</span>
<span id="t48" style="left:1355.11px;top:957.90px;font-size:17.6px;color:#d8d8d8;letter-spacing:0.000px;">2</span>
<span id="t49" style="left:39.00px;top:999.90px;font-size:17.6px;color:#d8d8d8;letter-spacing:0.125px;">Gaining Font</span>
<span id="t50" style="left:461.90px;top:998.90px;font-size:17.6px;color:#d8d8d8;letter-spacing:-0.034px;">Segoe UI</span>
<span id="t51" style="left:1185.66px;top:999.90px;font-size:17.6px;color:#d8d8d8;letter-spacing:0.648px;">12</span>
<span id="t52" style="left:1251.80px;top:998.76px;font-size:18px;color:#d8d8d8;letter-spacing:0.000px;font-weight:bold;">B</span>
<span id="t53" style="left:1297.68px;top:998.76px;font-size:18px;color:#d8d8d8;letter-spacing:0.000px;font-weight:bold;font-style:italic;">I</span>
<span id="t54" style="left:1341.80px;top:993.25px;font-size:20px;color:#d4d4d4;letter-spacing:0.000px;font-family:'Liberation Serif',serif;font-weight:bold;">A</span>
<span id="t55" style="left:39.00px;top:1041.90px;font-size:17.6px;color:#d8d8d8;letter-spacing:-0.131px;">Gaining Rows Brush</span>
<span id="t56" style="left:39.00px;top:1083.90px;font-size:17.6px;color:#d8d8d8;letter-spacing:-0.032px;">Gaining Cell Brush</span>
<span id="t57" style="left:39.00px;top:1125.90px;font-size:17.6px;color:#d8d8d8;letter-spacing:0.118px;">Losing Font</span>
<span id="t58" style="left:461.90px;top:1124.90px;font-size:17.6px;color:#d8d8d8;letter-spacing:-0.034px;">Segoe UI</span>
<span id="t59" style="left:1185.66px;top:1125.90px;font-size:17.6px;color:#d8d8d8;letter-spacing:0.648px;">12</span>
<span id="t60" style="left:1251.80px;top:1124.76px;font-size:18px;color:#d8d8d8;letter-spacing:0.000px;font-weight:bold;">B</span>
<span id="t61" style="left:1297.68px;top:1124.76px;font-size:18px;color:#d8d8d8;letter-spacing:0.000px;font-weight:bold;font-style:italic;">I</span>
<span id="t62" style="left:1341.80px;top:1119.25px;font-size:20px;color:#d4d4d4;letter-spacing:0.000px;font-family:'Liberation Serif',serif;font-weight:bold;">A</span>
<span id="t63" style="left:39.00px;top:1167.90px;font-size:17.6px;color:#d8d8d8;letter-spacing:-0.152px;">Losing Rows Brush</span>
<span id="t64" style="left:39.00px;top:1209.90px;font-size:17.6px;color:#d8d8d8;letter-spacing:-0.078px;">Losing Cell Brush</span>
<span id="t65" style="left:39.00px;top:1246.90px;font-size:17.6px;color:#d8d8d8;letter-spacing:0.094px;">Paint Whole Gaining/Losing Row</span>
<span id="t66" style="left:39.00px;top:1284.90px;font-size:17.6px;color:#d8d8d8;letter-spacing:0.296px;">Border</span>
<span id="t67" style="left:39.00px;top:1326.90px;font-size:17.6px;color:#d8d8d8;letter-spacing:-0.011px;">Group Panel Border</span>
<span id="t68" style="left:39.00px;top:1368.90px;font-size:17.6px;color:#d8d8d8;letter-spacing:0.086px;">Grid Lines Visibility</span>
<span id="t69" style="left:461.90px;top:1367.90px;font-size:17.6px;color:#d8d8d8;letter-spacing:0.680px;">Both</span>
<span id="t70" style="left:39.00px;top:1410.90px;font-size:17.6px;color:#d8d8d8;letter-spacing:-0.127px;">Grid Lines Brush</span>
<span id="t71" style="left:39.00px;top:1452.90px;font-size:17.6px;color:#d8d8d8;letter-spacing:0.369px;">Filtering mode</span>
<span id="t72" style="left:461.90px;top:1451.90px;font-size:17.6px;color:#d8d8d8;letter-spacing:0.391px;">Popup</span>
<span id="t73" style="left:39.00px;top:1494.90px;font-size:17.6px;color:#d8d8d8;letter-spacing:0.231px;">Selection mode</span>
<span id="t74" style="left:461.90px;top:1493.90px;font-size:17.6px;color:#d8d8d8;letter-spacing:0.192px;">Single</span>
<span id="t75" style="left:39.00px;top:1531.90px;font-size:17.6px;color:#d8d8d8;letter-spacing:0.098px;">Show Column Header</span>
<span id="t76" style="left:39.00px;top:1564.90px;font-size:17.6px;color:#d8d8d8;letter-spacing:-0.034px;">Show Group Panel</span>
<span id="t77" style="left:39.00px;top:1597.90px;font-size:17.6px;color:#d8d8d8;letter-spacing:0.100px;">Show Filter Icon</span>
<span id="t78" style="left:39.00px;top:1635.90px;font-size:17.6px;color:#d8d8d8;letter-spacing:0.145px;">Column Filtered Icon Fill</span>
</body></html>
